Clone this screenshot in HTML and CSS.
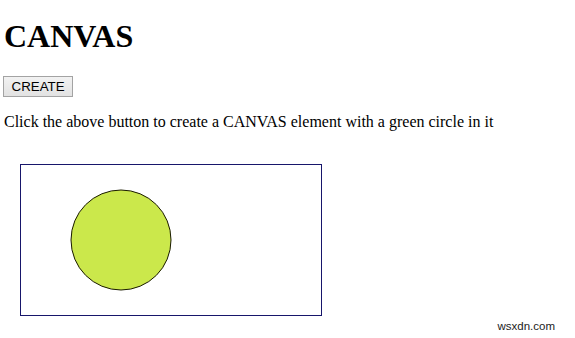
FILE: index.html
```html
<!DOCTYPE html>
<html>
<head>
<meta charset="utf-8">
<link rel="stylesheet" href="styles.css">
</head>
<body>
<h1 class="title">CANVAS</h1>
<button class="create">CREATE</button>
<p class="info">Click the above button to create a CANVAS element with a green circle in it</p>
<div class="stage">
  <svg class="board" width="300" height="150" viewBox="0 0 300 150">
    <circle cx="100" cy="75" r="50" fill="#cbe84b" stroke="#1a1a00" stroke-width="1"/>
  </svg>
</div>
<div class="mark">wsxdn.com</div>
</body>
</html>
```
FILE: styles.css
```css
html, body {
  margin: 0;
  padding: 0;
  background: #fff;
}
body {
  padding: 0 4px;
  font-family: "Liberation Serif", "Times New Roman", serif;
  font-size: 16px;
  color: #000;
  position: relative;
  height: 338px;
  box-sizing: border-box;
  overflow: hidden;
}
.title {
  font-size: 32px;
  font-weight: bold;
  margin: 18px 0 21px;
  line-height: normal;
}
.create {
  font-family: "Liberation Sans", Arial, sans-serif;
  font-size: 13.33px;
  height: 21px;
  padding: 1px 7.5px;
  margin-left: -1px;
  border: 1px solid #a3a3a3;
  border-radius: 0;
  background: linear-gradient(#f2f2f2, #e2e2e2);
  color: #000;
}
.info {
  margin: 16px 0;
}
.stage {
  padding: 17px 16px 16px;
}
.board {
  display: block;
  border: 1px solid #17166b;
  background: #fff;
}
.mark {
  position: absolute;
  right: 20px;
  bottom: 6px;
  font-family: "Liberation Sans", Arial, sans-serif;
  font-size: 11.5px;
  color: #222;
}
```
